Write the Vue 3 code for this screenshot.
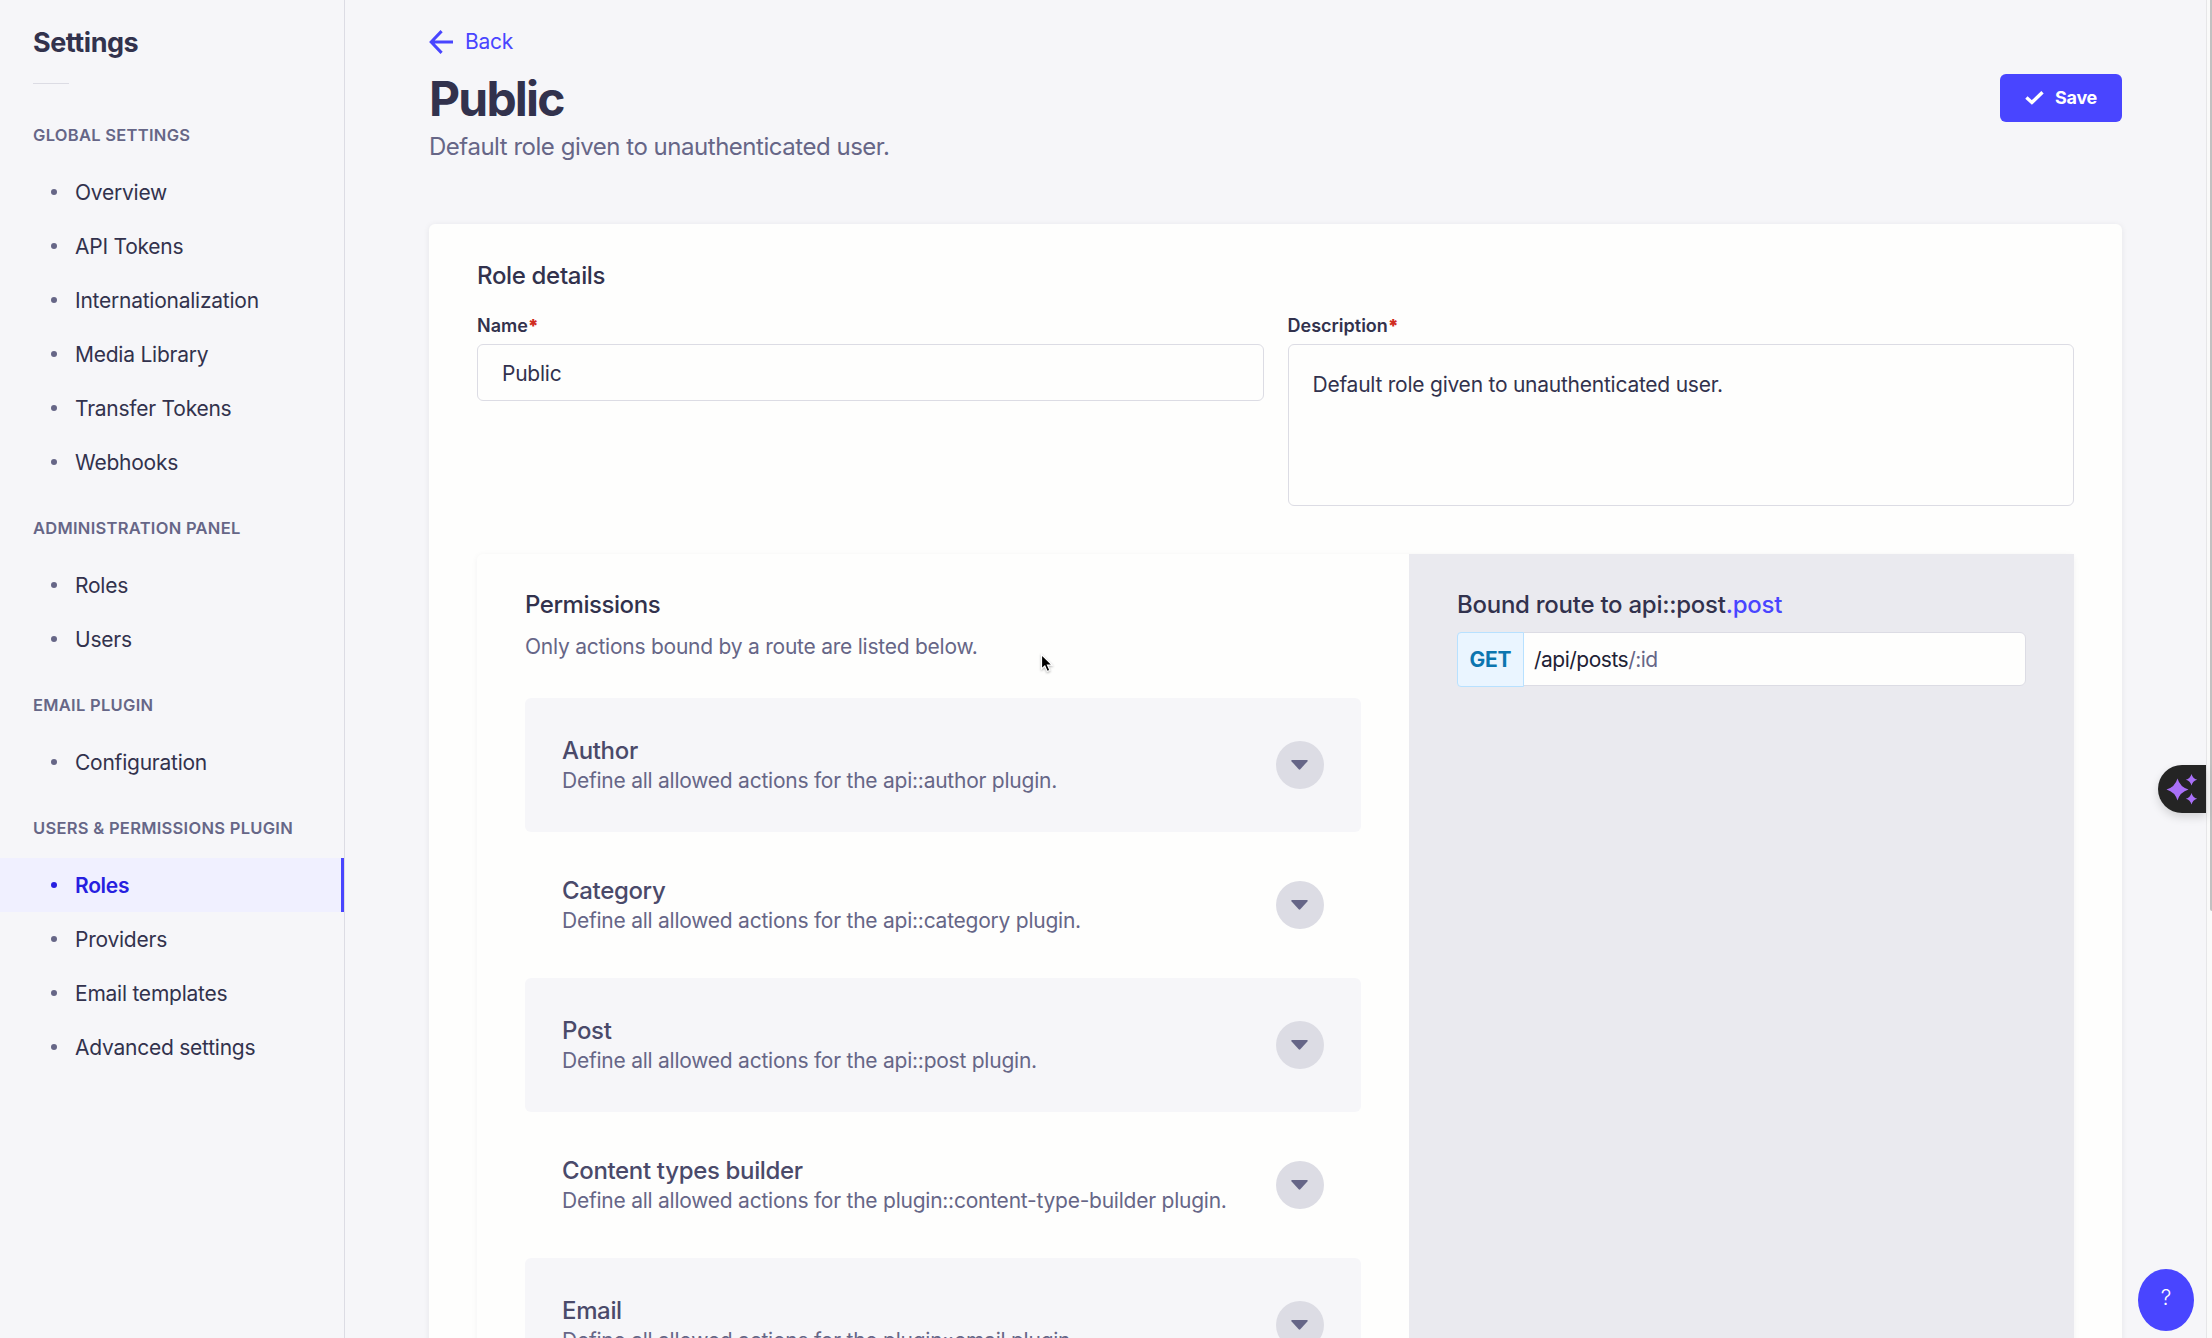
<script setup>
const sections = [
  { label: 'Global Settings', items: ['Overview', 'API Tokens', 'Internationalization', 'Media Library', 'Transfer Tokens', 'Webhooks'] },
  { label: 'Administration Panel', items: ['Roles', 'Users'] },
  { label: 'Email Plugin', items: ['Configuration'] },
  { label: 'Users & Permissions Plugin', items: ['Roles', 'Providers', 'Email templates', 'Advanced settings'], active: 0 },
]

const permissions = [
  { name: 'Author', uid: 'api::author' },
  { name: 'Category', uid: 'api::category' },
  { name: 'Post', uid: 'api::post' },
  { name: 'Content types builder', uid: 'plugin::content-type-builder' },
  { name: 'Email', uid: 'plugin::email' },
]
</script>

<template>
  <div class="app">
    <nav class="sidebar">
      <h2 class="sidebar-title">Settings</h2>
      <div class="divider"></div>
      <section v-for="section in sections" :key="section.label" class="nav-section">
        <h3 class="nav-label">{{ section.label }}</h3>
        <ul class="nav-list">
          <li
            v-for="(item, i) in section.items"
            :key="item"
            class="nav-item"
            :class="{ active: section.active === i }"
          >
            <span class="dot"></span><span class="nav-text">{{ item }}</span>
          </li>
        </ul>
      </section>
    </nav>

    <main class="main">
      <a class="back">
        <svg width="25" height="24" viewBox="0 0 25 24" fill="none" stroke="currentColor" stroke-width="3">
          <path d="M12.600 1.100 2.200 12l10.400 10.900M2.200 12H24" />
        </svg>
        <span>Back</span>
      </a>
      <header class="header">
        <h1>Public</h1>
        <button class="save">
          <svg width="19" height="14" viewBox="0 0 19 14" fill="none" stroke="currentColor" stroke-width="3.400">
            <path d="M1.400 6.400 6.900 11.400 17.500 1.300" />
          </svg>
          <span>Save</span>
        </button>
      </header>
      <p class="subtitle">Default role given to unauthenticated user.</p>

      <div class="card">
        <h2 class="title">Role details</h2>
        <div class="fields">
          <div class="field">
            <label>Name<b>*</b></label>
            <div class="input">Public</div>
          </div>
          <div class="field">
            <label>Description<b>*</b></label>
            <div class="input textarea">Default role given to unauthenticated user.</div>
          </div>
        </div>

        <div class="panel">
          <div class="permissions">
            <h2 class="title permissions-title">Permissions</h2>
            <p class="hint">Only actions bound by a route are listed below.</p>
            <div class="accordions">
              <div v-for="p in permissions" :key="p.name" class="accordion">
                <div class="accordion-text">
                  <h3>{{ p.name }}</h3>
                  <p>Define all allowed actions for the {{ p.uid }} plugin.</p>
                </div>
                <span class="toggle">
                  <svg width="17" height="10" viewBox="0 0 17 10"><path d="M1 0h15q1.200.4.400 1.400L9.300 9.300q-.8.8-1.600 0L.6 1.400Q-.2.4 1 0Z" fill="#666687" /></svg>
                </span>
              </div>
            </div>
          </div>
          <aside class="routes">
            <h2 class="title route-title">Bound route to api::post<span>.post</span></h2>
            <div class="route">
              <span class="method">GET</span>
              <span class="path">/api/posts<i>/:id</i></span>
            </div>
          </aside>
        </div>
      </div>
    </main>

    <div class="scrollbar"><div class="thumb"></div></div>

    <div class="assistant">
      <svg width="48" height="48" viewBox="0 0 48 48" fill="#a970f8">
        <path d="M19.500 13.500Q22 22 30.500 24.500 22 27 19.500 35.500 17 27 8.500 24.500 17 22 19.500 13.500Z" />
        <path d="M33.500 9Q34.700 13.500 39.200 14.700 34.700 15.900 33.500 20.400 32.300 15.900 27.800 14.700 32.300 13.500 33.500 9Z" />
        <path d="M33.500 28Q34.700 32.500 39.200 33.700 34.700 34.900 33.500 39.400 32.300 34.900 27.800 33.700 32.300 32.500 33.500 28Z" />
      </svg>
    </div>
    <div class="help">?</div>
    <svg class="cursor" width="16" height="22" viewBox="0 0 16 22">
      <path d="M1.500 1.500v14.500l3.300-3 2.400 5.500 2.700-1.200-2.400-5.200h4.700Z" fill="#000" stroke="#fff" stroke-width="1.200" />
    </svg>
  </div>
</template>

<style>
html, body { margin: 0; overflow: hidden; background: #f6f6f9; }
</style>

<style scoped>
.app {
  display: flex;
  position: relative;
  box-sizing: border-box;
  width: 2212px;
  height: 1338px;
  overflow: hidden;
  background: #f6f6f9;
  color: #32324d;
  font-family: Inter, "Liberation Sans", sans-serif;
  font-size: 21px;
  line-height: 30px;
  letter-spacing: -0.24px;
}
h1, h2, h3, p, ul { margin: 0; padding: 0; }
.sidebar {
  flex: none;
  box-sizing: border-box;
  width: 345px;
  border-right: 1px solid #dcdce4;
  padding-top: 25px;
}
.sidebar-title {
  margin-left: 33px;
  font-size: 27px;
  line-height: 36px;
  font-weight: 650;
  letter-spacing: -0.45px;
}
.divider {
  width: 36px;
  height: 1px;
  margin: 22px 0 39px 33px;
  background: #dcdce4;
}
.nav-section { margin-bottom: 27px; }
.nav-label {
  margin: 0 0 18px 33px;
  font-size: 16.5px;
  line-height: 24px;
  font-weight: 600;
  letter-spacing: 0.29px;
  text-transform: uppercase;
  color: #666687;
}
.nav-list { list-style: none; }
.nav-item {
  display: flex;
  align-items: center;
  box-sizing: border-box;
  height: 54px;
  padding-left: 51px;
}
.nav-text { padding-top: 1px; }
.dot {
  width: 6px;
  height: 6px;
  margin-right: 18px;
  border-radius: 50%;
  background: #666687;
}
.nav-item.active {
  background: #f0f0ff;
  border-right: 3px solid #4945ff;
  color: #271fe0;
  font-weight: 600;
  letter-spacing: -0.3px;
}
.active .dot { background: #271fe0; }

.main {
  flex: 1;
  padding: 27px 84px 0;
  min-width: 0;
}
.back {
  display: flex;
  align-items: center;
  gap: 11px;
  height: 30px;
  color: #4945ff;
}
.header {
  display: flex;
  align-items: center;
  justify-content: space-between;
  height: 60px;
  margin-top: 11px;
}
h1 {
  padding-top: 2px;
  font-size: 48px;
  line-height: 60px;
  font-weight: 680;
  letter-spacing: -1.8px;
}
.save {
  display: flex;
  align-items: center;
  gap: 11px;
  height: 48px;
  padding: 0 25px;
  border: 0;
  border-radius: 6px;
  background: #4945ff;
  color: #fff;
  font: 700 18px/24px Inter, sans-serif;
  letter-spacing: -0.3px;
}
.subtitle {
  padding-top: 1px;
  font-size: 24px;
  line-height: 36px;
  letter-spacing: -0.475px;
  color: #666687;
}
.card {
  box-sizing: border-box;
  height: 1400px;
  margin-top: 59px;
  padding: 37px 48px;
  border-radius: 6px;
  background: #fefefd;
  box-shadow: 0 1px 6px rgba(33, 33, 52, 0.08);
}
.title {
  font-size: 24px;
  line-height: 30px;
  font-weight: 550;
  letter-spacing: -0.33px;
}
.fields {
  display: grid;
  grid-template-columns: 1fr 1fr;
  align-items: start;
  gap: 24px;
  margin-top: 23px;
}
.field label {
  display: block;
  margin-bottom: 6px;
  font-size: 18px;
  line-height: 24px;
  font-weight: 600;
  letter-spacing: 0;
}
.field b { color: #d02b20; }
.input {
  box-sizing: border-box;
  height: 57px;
  padding: 14px 24px;
  border: 1px solid #dcdce4;
  border-radius: 6px;
}
.textarea { height: 162px; padding-top: 25px; }
.panel {
  display: flex;
  height: 1100px;
  margin-top: 48px;
  border-radius: 6px;
  box-shadow: 0 1px 6px rgba(33, 33, 52, 0.05);
}
.permissions {
  flex: none;
  box-sizing: border-box;
  width: 932px;
  padding: 36px 48px;
}
.permissions-title { letter-spacing: -0.45px; }
.hint { margin-top: 12px; color: #666687; }
.accordions {
  display: flex;
  flex-direction: column;
  gap: 6px;
  margin-top: 36px;
}
.accordion {
  display: flex;
  align-items: center;
  justify-content: space-between;
  height: 134px;
  padding: 0 37px;
  border-radius: 6px;
  color: #666687;
  white-space: nowrap;
}
.accordion:nth-child(odd) { background: #f6f6f9; }
.accordion-text { padding-top: 1px; }
.accordion h3 {
  font-size: 24px;
  line-height: 30px;
  font-weight: 550;
  letter-spacing: -0.34px;
  color: #4a4a6a;
}
.toggle {
  display: flex;
  align-items: center;
  justify-content: center;
  width: 48px;
  height: 48px;
  border-radius: 50%;
  background: #dcdce4;
}
.toggle svg { margin-right: 1px; }
.routes {
  flex: 1;
  padding: 36px 48px;
  background: #eaeaef;
}
.route-title { letter-spacing: -0.26px; }
.route-title span { color: #4945ff; }
.route {
  display: flex;
  box-sizing: border-box;
  height: 54px;
  margin-top: 12px;
  border: 1px solid #dcdce4;
  border-radius: 6px;
  background: #fefefd;
  line-height: 54px;
}
.method {
  box-sizing: border-box;
  width: 67px;
  height: 55px;
  margin: -1px 0 0 -1px;
  border: 1px solid #b8e1ff;
  border-radius: 4px 0 0 4px;
  background: #eaf5ff;
  color: #0c75af;
  font-weight: 650;
  text-align: center;
}
.path { padding-left: 10px; color: #212134; letter-spacing: -0.5px; }
.path i { font-style: normal; color: #666687; }

.scrollbar {
  flex: none;
  box-sizing: border-box;
  width: 6px;
  padding-left: 3px;
  border-left: 1px solid #e6e6e8;
  background: #fafafa;
}
.thumb {
  width: 2px;
  height: 911px;
  background: #c1c1c1;
  border-radius: 0 0 0 2px;
}
.assistant {
  position: absolute;
  top: 765px;
  right: 6px;
  width: 48px;
  height: 48px;
  border-radius: 24px 0 0 24px;
  background: #242424;
  box-shadow: 0 4px 10px rgba(0, 0, 0, 0.15);
}
.assistant svg { display: block; }
.help {
  position: absolute;
  left: 2138px;
  top: 1269px;
  width: 56px;
  height: 62px;
  border-radius: 50%;
  background: #4945ff;
  color: #fff;
  font-size: 21px;
  line-height: 57px;
  font-weight: 300;
  text-align: center;
}
.cursor {
  position: absolute;
  left: 1040px;
  top: 653px;
  filter: drop-shadow(0 1px 1px rgba(0, 0, 0, 0.3));
}
</style>
